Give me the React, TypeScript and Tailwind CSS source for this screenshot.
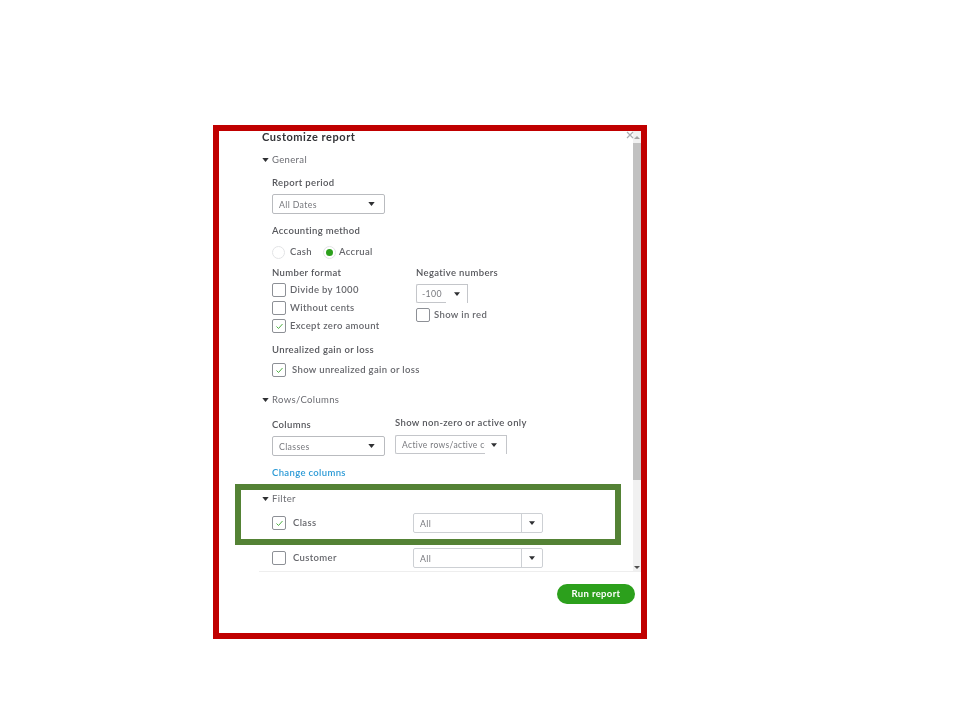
import React from "react";

const Caret = ({ className = "", w = 8, h = 5 }: { className?: string; w?: number; h?: number }) => (
  <svg width={w} height={h} viewBox="0 0 8 5" className={className}>
    <path d="M0 0H8L4 5Z" fill="#2f3033" />
  </svg>
);

const Check = () => (
  <svg width="9" height="8" viewBox="0 0 9 8">
    <path d="M1.5 4.5L3.5 6.5L7.5 2" fill="none" stroke="#4fb044" strokeWidth="1" />
  </svg>
);

const Box = ({ checked = false }: { checked?: boolean }) => (
  <span className="flex h-[14px] w-[14px] shrink-0 items-center justify-center rounded-[2px] border border-[#8d9096] bg-white">
    {checked && <Check />}
  </span>
);

const Section = ({ label, className = "" }: { label: string; className?: string }) => (
  <div className={`flex h-[14px] items-center gap-[3px] pl-[43px] text-[#6b6c72] ${className}`}>
    <Caret w={7} h={4} />
    <span className="pt-[1px]">{label}</span>
  </div>
);

const Label = ({ children, className = "" }: { children: React.ReactNode; className?: string }) => (
  <div className={`flex h-[14px] items-center whitespace-nowrap pt-[1px] font-semibold text-[#55565b] ${className}`}>{children}</div>
);

const CheckRow = ({ label, checked, gap = "gap-[4px]", className = "" }: { label: string; checked?: boolean; gap?: string; className?: string }) => (
  <div className={`flex h-[14px] items-center whitespace-nowrap font-semibold text-[#66676c] ${gap} ${className}`}>
    <Box checked={checked} />
    <span className="pt-[1px]">{label}</span>
  </div>
);

const Select = ({ text, className = "" }: { text: string; className?: string }) => (
  <div className={`flex h-[20px] w-[113px] items-center justify-between rounded-[2px] border border-[#b9bbbf] bg-white pl-[6px] pr-[9px] text-[8.75px] text-[#77787d] ${className}`}>
    <span className="pt-[1px]">{text}</span>
    <Caret w={7} h={4} />
  </div>
);

const ComboFilter = ({ className = "" }: { className?: string }) => (
  <div className={`ml-auto flex h-[20px] w-[130px] rounded-[2px] border border-[#cdd0d4] text-[8.75px] text-[#77787d] ${className}`}>
    <span className="flex flex-1 items-center pl-[6px] pt-[1px]">All</span>
    <span className="flex w-[21px] items-center justify-center border-l border-[#cdd0d4]">
      <Caret w={6} h={4} />
    </span>
  </div>
);

export default function App() {
  return (
    <div className="h-[720px] w-[960px] overflow-hidden bg-white pl-[213px] pt-[125px] font-['Lato','Open_Sans',sans-serif] text-[9.5px] tracking-[0.35px]">
      <div className="relative h-[514px] w-[434px] border-[6px] border-[#c00000] bg-white">
        <div className="ml-[40px] flex h-[441px] border-b border-[#eeeeee]">
          <div className="-ml-[40px] w-[414px] shrink-0 overflow-hidden blur-[0.4px]">
            <div className="flex h-[10px] items-center whitespace-nowrap pl-[43px] text-[11px] leading-none font-bold tracking-[0.55px] text-[#333438]">Customize report</div>
            <Section label="General" className="mt-[12px]" />
            <div className="pl-[53px]">
              <Label className="mt-[9px]">Report period</Label>
              <Select text="All Dates" className="mt-[4px]" />
              <Label className="mt-[10px]">Accounting method</Label>
              <div className="mt-[7px] flex h-[14px] items-center font-semibold text-[#66676c]">
                <span className="h-[13px] w-[13px] rounded-full border border-[#e2e3e5]" />
                <span className="ml-[5px] pt-[1px]">Cash</span>
                <span className="ml-[11px] flex h-[13px] w-[13px] items-center justify-center rounded-full border border-[#e2e3e5]">
                  <span className="h-[7px] w-[7px] rounded-full bg-[#2ca01c]" />
                </span>
                <span className="ml-[3px] pt-[1px]">Accrual</span>
              </div>
              <div className="mt-[7px] flex">
                <div className="flex w-[144px] flex-col">
                  <Label>Number format</Label>
                  <CheckRow label="Divide by 1000" className="mt-[3px]" />
                  <CheckRow label="Without cents" className="mt-[4px]" />
                  <CheckRow label="Except zero amount" checked className="mt-[4px]" />
                </div>
                <div className="flex flex-col">
                  <Label>Negative numbers</Label>
                  <div className="mt-[4px] flex h-[19px] w-[52px] text-[8.75px] text-[#77787d]">
                    <span className="flex w-[30px] items-center rounded-l-[2px] border border-r-0 border-[#c4c6ca] pl-[5px] pt-[1px]">-100</span>
                    <span className="flex flex-1 items-center justify-center border-r border-t border-[#c4c6ca]">
                      <Caret w={6} h={4} />
                    </span>
                  </div>
                  <CheckRow label="Show in red" className="mt-[5px]" />
                </div>
              </div>
              <Label className="mt-[10px]">Unrealized gain or loss</Label>
              <CheckRow label="Show unrealized gain or loss" checked gap="gap-[6px]" className="mt-[6px]" />
            </div>
            <Section label="Rows/Columns" className="mt-[16px]" />
            <div className="flex pl-[53px]">
              <div className="w-[123px]">
                <Label className="mt-[11px]">Columns</Label>
                <Select text="Classes" className="mt-[4px]" />
              </div>
              <div>
                <Label className="mt-[9px]">Show non-zero or active only</Label>
                <div className="mt-[5px] flex h-[19px] w-[112px] text-[8.5px] text-[#77787d]">
                  <span className="flex w-[90px] items-center overflow-hidden whitespace-nowrap rounded-l-[2px] border border-r-0 border-[#c4c6ca] pl-[6px] pt-[1px]">Active rows/active columns</span>
                  <span className="flex flex-1 items-center justify-center border-r border-t border-[#c4c6ca] pr-[4px]">
                    <Caret w={6} h={4} />
                  </span>
                </div>
              </div>
            </div>
            <div className="mt-[10px] flex h-[14px] items-center pl-[53px] pt-[1px] font-semibold text-[#2b9ad6]">Change columns</div>
            <Section label="Filter" className="mt-[12px]" />
            <div className="mt-[7px] flex h-[20px] w-[324px] items-center pl-[53px]">
              <CheckRow label="Class" checked gap="gap-[7px]" />
              <ComboFilter />
            </div>
            <div className="mt-[15px] flex h-[20px] w-[324px] items-center pl-[53px]">
              <CheckRow label="Customer" gap="gap-[7px]" />
              <ComboFilter />
            </div>
          </div>
          <div className="flex w-[8px] shrink-0 flex-col bg-[#f1f1f1]">
            <div className="flex h-[12px] items-center justify-center">
              <svg width="6" height="3" viewBox="0 0 6 3"><path d="M0 3H6L3 0Z" fill="#a3a3a3" /></svg>
            </div>
            <div className="h-[337px] bg-[#c1c1c1]" />
            <div className="flex-1" />
            <div className="flex h-[8px] items-center justify-center">
              <svg width="6" height="3" viewBox="0 0 6 3"><path d="M0 0H6L3 3Z" fill="#505050" /></svg>
            </div>
          </div>
        </div>
        <div className="mt-[12px] flex justify-end pr-[6px]">
          <button className="h-[20px] w-[78px] rounded-full bg-[#2ca01c] text-[9.5px] font-bold text-white blur-[0.3px]">Run report</button>
        </div>
        <svg width="8" height="8" viewBox="0 0 8 8" className="absolute right-[7px] top-0">
          <path d="M1 1L7 7M7 1L1 7" stroke="#a9abaf" strokeWidth="1.2" />
        </svg>
        <div className="absolute left-[16px] top-[353px] h-[61px] w-[386px] border-[6px] border-[#548235]" />
      </div>
    </div>
  );
}
